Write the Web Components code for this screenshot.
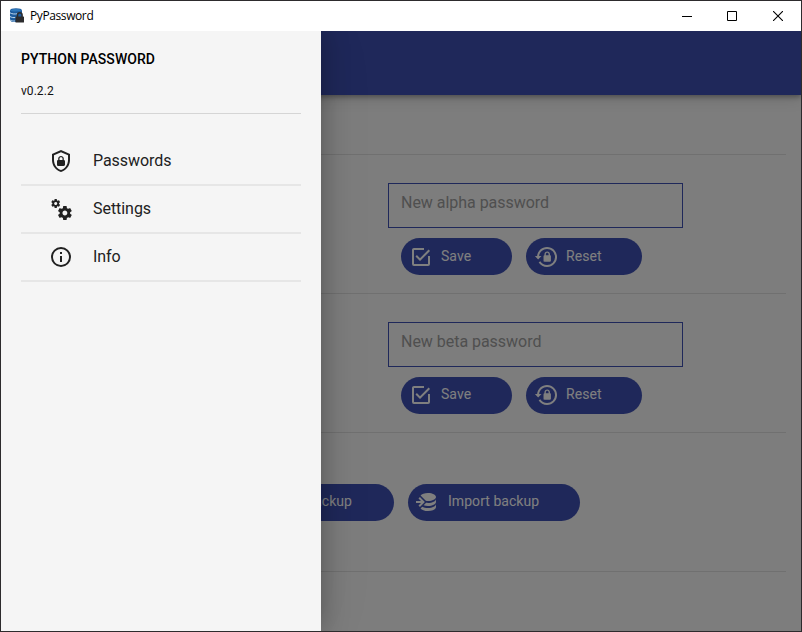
<!DOCTYPE html>
<html lang="en">
<head>
<meta charset="utf-8">
<title>PyPassword</title>
<style>
html,body{margin:0;height:100%;overflow:hidden}
body{font-family:Roboto,sans-serif;background:#2d2b2d}
</style>
</head>
<body>
<desktop-window caption="PyPassword">
  <app-bar></app-bar>
  <app-section class="intro" style="--h:60px"></app-section>
  <app-section style="--h:139px">
    <password-form hint="New alpha password"></password-form>
  </app-section>
  <app-section style="--h:139px">
    <password-form hint="New beta password" style="--top:27.500px;--gap-top:10px"></password-form>
  </app-section>
  <app-section style="--h:139px">
    <button-row style="justify-content:center;padding:50.500px 1px 0 0">
      <pill-button icon="export" style="--w:172px">Export backup</pill-button>
      <pill-button icon="import" style="--w:172px">Import backup</pill-button>
    </button-row>
  </app-section>
  <nav-drawer slot="overlay" heading="PYTHON PASSWORD" version="v0.2.2">
    <nav-item icon="shield">Passwords</nav-item>
    <nav-item icon="cogs">Settings</nav-item>
    <nav-item icon="info">Info</nav-item>
  </nav-drawer>
</desktop-window>
<script>
const ICONS = {
  shield:'M21,11C21,16.55 17.16,21.74 12,23C6.84,21.74 3,16.55 3,11V5L12,1L21,5V11M12,21C15.75,20 19,15.54 19,11.22V6.3L12,3.18L5,6.3V11.22C5,15.54 8.25,20 12,21M14.8,11V9.5C14.8,8.1 13.4,7 12,7C10.6,7 9.2,8.1 9.2,9.5V11C8.6,11 8,11.6 8,12.2V15.7C8,16.4 8.6,17 9.2,17H14.7C15.4,17 16,16.4 16,15.8V12.3C16,11.6 15.4,11 14.8,11M13.5,11H10.5V9.5C10.5,8.7 11.2,8.2 12,8.2C12.8,8.2 13.5,8.7 13.5,9.5V11Z',
  cogs:'M15.9,18.45C17.25,18.45 18.35,17.35 18.35,16C18.35,14.65 17.25,13.55 15.9,13.55C14.54,13.55 13.45,14.65 13.45,16C13.45,17.35 14.54,18.45 15.9,18.45M21.1,16.68L22.58,17.84C22.71,17.95 22.75,18.13 22.66,18.29L21.26,20.71C21.17,20.86 21,20.92 20.83,20.86L19.09,20.16C18.73,20.44 18.33,20.67 17.91,20.85L17.64,22.7C17.62,22.87 17.47,23 17.3,23H14.5C14.32,23 14.18,22.87 14.15,22.7L13.89,20.85C13.46,20.67 13.07,20.44 12.71,20.16L10.96,20.86C10.81,20.92 10.62,20.86 10.54,20.71L9.14,18.29C9.05,18.13 9.09,17.95 9.22,17.84L10.7,16.68L10.65,16L10.7,15.31L9.22,14.16C9.09,14.05 9.05,13.86 9.14,13.71L10.54,11.29C10.62,11.13 10.81,11.07 10.96,11.13L12.71,11.84C13.07,11.56 13.46,11.32 13.89,11.15L14.15,9.29C14.18,9.13 14.32,9 14.5,9H17.3C17.47,9 17.62,9.13 17.64,9.29L17.91,11.15C18.33,11.32 18.73,11.56 19.09,11.84L20.83,11.13C21,11.07 21.17,11.13 21.26,11.29L22.66,13.71C22.75,13.86 22.71,14.05 22.58,14.16L21.1,15.31L21.15,16L21.1,16.68M6.69,8.07C7.56,8.07 8.26,7.37 8.26,6.5C8.26,5.63 7.56,4.92 6.69,4.92A1.58,1.58 0 0,0 5.11,6.5C5.11,7.37 5.82,8.07 6.69,8.07M10.03,6.94L11,7.68C11.07,7.75 11.09,7.87 11.03,7.97L10.13,9.53C10.08,9.63 9.96,9.67 9.86,9.63L8.74,9.18L8,9.62L7.81,10.81C7.79,10.92 7.7,11 7.59,11H5.79C5.67,11 5.58,10.92 5.56,10.81L5.4,9.62L4.64,9.18L3.52,9.63C3.41,9.67 3.3,9.63 3.24,9.53L2.34,7.97C2.28,7.87 2.31,7.75 2.39,7.68L3.34,6.94L3.31,6.5L3.34,6.06L2.39,5.32C2.31,5.25 2.28,5.13 2.34,5.03L3.24,3.47C3.3,3.37 3.41,3.33 3.52,3.37L4.63,3.82L5.4,3.38L5.56,2.19C5.58,2.08 5.67,2 5.79,2H7.59C7.7,2 7.79,2.08 7.81,2.19L8,3.38L8.74,3.82L9.86,3.37C9.96,3.33 10.08,3.37 10.13,3.47L11.03,5.03C11.09,5.13 11.07,5.25 11,5.32L10.03,6.06L10.06,6.5L10.03,6.94Z',
  info:'M11,9H13V7H11M12,20C7.59,20 4,16.41 4,12C4,7.59 7.59,4 12,4C16.41,4 20,7.59 20,12C20,16.41 16.41,20 12,20M12,2A10,10 0 0,0 2,12A10,10 0 0,0 12,22A10,10 0 0,0 22,12A10,10 0 0,0 12,2M11,17H13V11H11V17Z',
  check:'M19,19H5V5H15V3H5C3.89,3 3,3.89 3,5V19A2,2 0 0,0 5,21H19A2,2 0 0,0 21,19V11H19M7.91,10.08L6.5,11.5L11,16L21,6L19.59,4.58L11,13.17L7.91,10.08Z',
  reset:'M12.63,2C18.16,2 22.64,6.5 22.64,12C22.64,17.5 18.16,22 12.63,22C9.12,22 6.05,20.18 4.26,17.43L5.84,16.18C7.25,18.47 9.76,20 12.64,20A8,8 0 0,0 20.64,12A8,8 0 0,0 12.64,4C8.56,4 5.2,7.06 4.71,11H7.1L3.73,14.4L.5,11H2.69C3.19,5.95 7.45,2 12.63,2M15.59,10.24C16.09,10.25 16.5,10.65 16.5,11.16V15.77C16.5,16.27 16.09,16.69 15.58,16.69H10.05C9.54,16.69 9.13,16.27 9.13,15.77V11.16C9.13,10.65 9.54,10.25 10.04,10.24V9.23C10.04,7.7 11.29,6.46 12.81,6.46C14.34,6.46 15.59,7.7 15.59,9.23V10.24M12.81,7.86C12.06,7.86 11.44,8.47 11.44,9.23V10.24H14.19V9.23C14.19,8.47 13.57,7.86 12.81,7.86Z',
  import:'M12,3C8.59,3 5.69,4.07 4.54,5.57L9.79,10.82C10.5,10.93 11.22,11 12,11C16.42,11 20,9.21 20,7C20,4.79 16.42,3 12,3M3.92,7.08L2.5,8.5L5,11H0V13H5L2.5,15.5L3.92,16.92L8.84,12M20,9C20,11.21 16.42,13 12,13C11.34,13 10.7,12.95 10.09,12.87L7.62,15.34C8.88,15.75 10.38,16 12,16C16.42,16 20,14.21 20,12M20,14C20,16.21 16.42,18 12,18C9.72,18 7.67,17.5 6.21,16.75L4.53,18.43C5.68,19.93 8.59,21 12,21C16.42,21 20,19.21 20,17',
  export:'M12,3C7.58,3 4,4.79 4,7C4,9.21 7.58,11 12,11C12.5,11 13,10.97 13.5,10.92V9.5H16.39L15.39,8.5L18.9,5C17.5,3.8 14.94,3 12,3M18.92,7.08L17.5,8.5L20,11H15V13H20L17.5,15.5L18.92,16.92L23.84,12M4,9V12C4,14.21 7.58,16 12,16C13.17,16 14.26,15.85 15.25,15.63L16.38,14.5H13.5V12.92C13,12.97 12.5,13 12,13C7.58,13 4,11.21 4,9M4,14V17C4,19.21 7.58,21 12,21C14.94,21 17.5,20.2 18.9,19L17,17.1C15.61,17.66 13.9,18 12,18C7.58,18 4,16.21 4,14Z'
};
function define(name, render){
  customElements.define(name, class extends HTMLElement{
    constructor(){ super(); this.attachShadow({mode:'open'}); }
    connectedCallback(){ this.shadowRoot.innerHTML = render(this); }
  });
}
define('md-icon', e => `<style>:host{display:block;flex:none;width:24px;height:24px}svg{display:block}</style>
<svg width="24" height="24" viewBox="${e.getAttribute('name') === 'reset' ? '-.4 0 24 24' : '0 0 24 24'}" fill="currentColor"><path d="${ICONS[e.getAttribute('name')]}"/></svg>`);

define('title-bar', () => `<style>
:host{display:flex;align-items:center;height:30px;background:#fff;color:#000;font:12px "Open Sans","Noto Sans",sans-serif}
.logo{margin:0 5px 0 8px;flex:none}
.name{flex:1;letter-spacing:-.4px;padding-bottom:1px}
.ctl{width:46px;flex:none;display:flex;justify-content:center}
.ctl svg{display:block}
.min{padding-left:2px;width:44px}
</style>
<svg class="logo" width="16" height="16" viewBox="0 0 16 16">
<path fill="#1d5c9e" d="M1 2.500C1 1 3.500 .300 7 .300S13 1 13 2.500V14H3L1 12.500Z"/>
<path fill="#2f78bb" d="M1.500 2.500C3 .800 10 .600 12.500 2.300C11 3.700 3.500 4 1.500 2.500Z"/>
<path stroke="#cfe4f5" stroke-width=".9" fill="none" d="M1 4.800C3 6.200 6 6.200 8.500 5.700M1 8.500C2.500 9.600 4.500 9.700 6.500 9.500M1 12C3 13 4 13.200 6 13"/>
<rect x="6.500" y="8.500" width="8.500" height="6" rx=".6" fill="#2c2c2e"/>
<path d="M8.500 9V7a2.300 2.300 0 0 1 4.600 0v2" fill="none" stroke="#2c2c2e" stroke-width="1.500"/>
</svg>
<span class="name"><slot></slot></span>
<span class="ctl min"><svg width="10" height="10"><path d="M0 5.500H10" stroke="#000"/></svg></span>
<span class="ctl"><svg width="10" height="10"><path d="M.5.500H9.500V9.500H.5Z" stroke="#000" fill="none"/></svg></span>
<span class="ctl"><svg width="10" height="10"><path d="M0 0L10 10M10 0L0 10" stroke="#000" stroke-width="1.100"/></svg></span>`);

define('desktop-window', e => `<style>
:host{display:grid;grid-template-rows:30px 600px;box-sizing:border-box;width:802px;height:632px;border:1px solid #2d2b2d;background:#fff}
.client{position:relative;overflow:hidden;background:#fafafa}
.scrim{position:absolute;inset:0;background:rgba(0,0,0,.5)}
::slotted([slot=overlay]){position:absolute;left:0;top:0;bottom:0}
</style>
<title-bar>${e.getAttribute('caption')}</title-bar>
<div class="client"><slot></slot><div class="scrim"></div><slot name="overlay"></slot></div>`);

define('app-bar', () => `<style>:host{display:block;height:64px;background:#3f51b5;position:relative;
box-shadow:0 2px 5px rgba(0,0,0,.32),0 4px 14px rgba(0,0,0,.12)}</style>`);

define('app-section', () => `<style>
:host{display:block;box-sizing:border-box;height:var(--h);margin:0 15px;border-bottom:1px solid #e0e0e0}
</style><slot></slot>`);

define('button-row', () => `<style>:host{display:flex;gap:14px}</style><slot></slot>`);

define('pill-button', e => `<style>
:host{display:flex;align-items:center;gap:8px;box-sizing:border-box;width:var(--w);height:37px;padding-left:8.500px;border-radius:19px;
background:#3f51b5;color:#fff;font-size:14px;letter-spacing:.05px;white-space:nowrap}
span{padding-bottom:2px}
</style><md-icon name="${e.getAttribute('icon')}"></md-icon><span><slot></slot></span>`);

define('password-form', e => `<style>
:host{display:flex;flex-direction:column;padding:var(--top,28px) 0 0 372px}
.field{box-sizing:border-box;width:295px;height:45px;border:1px solid #3f51b5;padding:0 12px;font-size:16px;line-height:37px;letter-spacing:-.03px;color:#9f9f9f}
.row{padding:var(--gap-top,10px) 0 0 12.500px}
</style>
<div class="field">${e.getAttribute('hint')}</div>
<button-row class="row">
<pill-button icon="check" style="--w:111px">Save</pill-button>
<pill-button icon="reset" style="--w:116px">Reset</pill-button></button-row>`);

define('nav-drawer', e => `<style>
:host{display:flex;flex-direction:column;box-sizing:border-box;width:320px;padding:20px;background:#f5f5f5;box-shadow:0 0 26px rgba(0,0,0,.3),0 0 60px rgba(0,0,0,.06)}
h1{margin:0;font-size:14px;line-height:17px;font-weight:500;letter-spacing:.06px;color:#000}
p{margin:0 0 14px;padding-top:16px;font-size:12px;line-height:15px;letter-spacing:.05px;color:#111}
nav{border-top:1px solid #d5d5d5;padding-top:24px}
</style><h1>${e.getAttribute('heading')}</h1><p>${e.getAttribute('version')}</p><nav><slot></slot></nav>`);

define('nav-item', e => `<style>
:host{display:flex;align-items:center;gap:20px;box-sizing:border-box;height:48px;padding-left:28px;border-bottom:2px solid #e6e6e6;color:#212121;font-size:16px;letter-spacing:-.05px}
span{padding-bottom:2px}
</style><md-icon name="${e.getAttribute('icon')}"></md-icon><span><slot></slot></span>`);
</script>
</body>
</html>
